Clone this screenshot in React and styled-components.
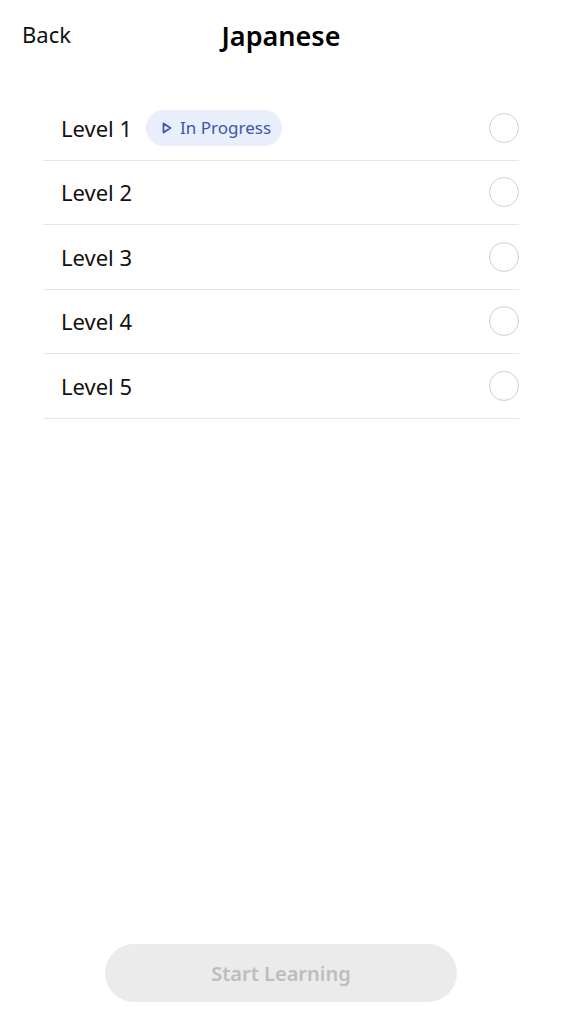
import React from "react";
import styled, { createGlobalStyle } from "styled-components";

const Global = createGlobalStyle`
  html, body { margin: 0; padding: 0; background: #fff; }
  body { font-family: "Noto Sans", "Open Sans", sans-serif; color: #111; }
`;

const Page = styled.div`
  width: 562px;
  height: 1024px;
  display: flex;
  flex-direction: column;
  box-sizing: border-box;
`;

const Header = styled.header`
  position: relative;
  height: 72px;
  display: flex;
  align-items: center;
  justify-content: center;
`;

const BackButton = styled.button`
  position: absolute;
  left: 22px;
  top: 19px;
  background: none;
  border: none;
  padding: 0;
  font-family: inherit;
  font-size: 22px;
  color: #111;
  line-height: 30px;
`;

const Title = styled.h1`
  margin: 0;
  font-size: 27px;
  font-weight: 600;
  color: #000;
  line-height: 36px;
`;

const List = styled.ul`
  list-style: none;
  margin: 24px 43px 0;
  padding: 0;
`;

const Row = styled.li`
  box-sizing: border-box;
  height: 64.5px;
  display: flex;
  align-items: center;
  padding: 0 0 0 18px;
  border-bottom: 1px solid #e6e6e6;
  gap: 14px;
`;

const Label = styled.span`
  font-size: 22px;
  color: #111;
`;

const Badge = styled.span`
  display: inline-flex;
  align-items: center;
  gap: 8px;
  height: 36px;
  padding: 0 11px 0 16px;
  border-radius: 18px;
  background: #e9eefb;
  color: #3b56b3;
  font-size: 17px;
`;

const Radio = styled.span`
  margin-left: auto;
  width: 28px;
  height: 28px;
  border-radius: 50%;
  border: 1.5px solid #cfcfcf;
`;

const Spacer = styled.div`
  flex: 1;
`;

const Footer = styled.div`
  display: flex;
  justify-content: center;
  padding-bottom: 22px;
`;

const StartButton = styled.button`
  width: 352px;
  height: 58px;
  border-radius: 29px;
  border: none;
  background: #ebebeb;
  color: #bdbdbd;
  font-family: inherit;
  font-size: 20px;
  font-weight: 600;
`;

const PlayIcon = () => (
  <svg width="10" height="12" viewBox="0 0 10 12">
    <path d="M1.5 1.5 L8.5 6 L1.5 10.5 Z" fill="none" stroke="currentColor" strokeWidth="1.8" strokeLinejoin="round" />
  </svg>
);

const levels = [1, 2, 3, 4, 5];

export default function App() {
  return (
    <>
      <Global />
      <Page>
        <Header>
          <BackButton>Back</BackButton>
          <Title>Japanese</Title>
        </Header>
        <List>
          {levels.map((n) => (
            <Row key={n}>
              <Label>Level {n}</Label>
              {n === 1 && (
                <Badge>
                  <PlayIcon />
                  In Progress
                </Badge>
              )}
              <Radio />
            </Row>
          ))}
        </List>
        <Spacer />
        <Footer>
          <StartButton>Start Learning</StartButton>
        </Footer>
      </Page>
    </>
  );
}
